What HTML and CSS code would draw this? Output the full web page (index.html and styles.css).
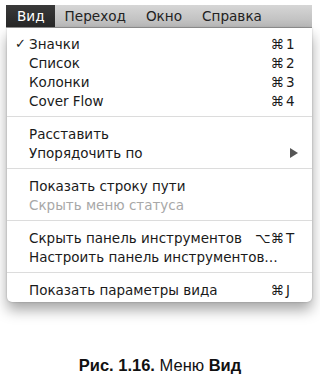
FILE: index.html
```html
<!DOCTYPE html>
<html lang="ru">
<head>
    <meta charset="UTF-8">
    <meta name="viewport" content="width=device-width, initial-scale=1.0">
    <title>Меню Вид</title>
    <link rel="stylesheet" href="styles.css">
</head>
<body>
    <div class="figure">
        <div class="menubar">
            <span class="menubar-item active">Вид</span>
            <span class="menubar-item">Переход</span>
            <span class="menubar-item">Окно</span>
            <span class="menubar-item">Справка</span>
        </div>

        <div class="menu">
            <div class="menu-group">
                <div class="menu-item">
                    <span class="mark">&#10003;</span>
                    <span class="label">Значки</span>
                    <span class="mods">&#8984;</span><span class="key">1</span>
                </div>
                <div class="menu-item">
                    <span class="mark"></span>
                    <span class="label">Список</span>
                    <span class="mods">&#8984;</span><span class="key">2</span>
                </div>
                <div class="menu-item">
                    <span class="mark"></span>
                    <span class="label">Колонки</span>
                    <span class="mods">&#8984;</span><span class="key">3</span>
                </div>
                <div class="menu-item">
                    <span class="mark"></span>
                    <span class="label">Cover Flow</span>
                    <span class="mods">&#8984;</span><span class="key">4</span>
                </div>
            </div>
            <div class="separator"></div>
            <div class="menu-group">
                <div class="menu-item">
                    <span class="mark"></span>
                    <span class="label">Расставить</span>
                </div>
                <div class="menu-item">
                    <span class="mark"></span>
                    <span class="label">Упорядочить по</span>
                    <span class="submenu-arrow"></span>
                </div>
            </div>
            <div class="separator"></div>
            <div class="menu-group">
                <div class="menu-item">
                    <span class="mark"></span>
                    <span class="label">Показать строку пути</span>
                </div>
                <div class="menu-item disabled">
                    <span class="mark"></span>
                    <span class="label">Скрыть меню статуса</span>
                </div>
            </div>
            <div class="separator"></div>
            <div class="menu-group">
                <div class="menu-item">
                    <span class="mark"></span>
                    <span class="label">Скрыть панель инструментов</span>
                    <span class="mods">&#8997;&#8984;</span><span class="key">T</span>
                </div>
                <div class="menu-item">
                    <span class="mark"></span>
                    <span class="label">Настроить панель инструментов…</span>
                </div>
            </div>
            <div class="separator"></div>
            <div class="menu-group">
                <div class="menu-item">
                    <span class="mark"></span>
                    <span class="label">Показать параметры вида</span>
                    <span class="mods">&#8984;</span><span class="key">J</span>
                </div>
            </div>
        </div>

        <p class="caption"><b>Рис. 1.16.</b> Меню <b>Вид</b></p>
    </div>
</body>
</html>
```

FILE: styles.css
```css
body {
    margin: 0;
    background-color: #ffffff;
    font-family: 'DejaVu Sans', sans-serif;
    color: #1a1a1a;
}
.figure {
    width: 320px;
    padding-top: 5px;
}
.menubar {
    display: flex;
    align-items: center;
    width: 306px;
    height: 22px;
    margin-left: 6px;
    background: linear-gradient(#d6d6d6, #b9b9b9);
    border-bottom: 1px solid #9a9a9a;
    font-size: 13.6px;
    color: #222;
}
.menubar-item {
    height: 22px;
    line-height: 22px;
    padding: 0 10px;
}
.menubar-item.active {
    background: linear-gradient(#3a3a3a, #262626);
    color: #ffffff;
    padding: 0 10px 0 11px;
}
.menu {
    width: 305px;
    margin-left: 7px;
    padding: 6px 0 3px 0;
    background-color: #ffffff;
    border-radius: 0 0 5px 5px;
    box-shadow: 0 8px 14px rgba(0, 0, 0, 0.35), 0 0 2px rgba(0, 0, 0, 0.25);
    font-size: 13.5px;
}
.menu-item {
    display: flex;
    align-items: center;
    height: 19px;
    padding: 0 14px 0 8px;
}
.mark {
    width: 14px;
    font-size: 13px;
    font-weight: bold;
}
.label {
    flex: 1;
}
.mods {
    text-align: right;
}
.key {
    width: 12px;
    padding-left: 2px;
}
.disabled {
    color: #a8a8a8;
}
.submenu-arrow {
    width: 0;
    height: 0;
    border-top: 5px solid transparent;
    border-bottom: 5px solid transparent;
    border-left: 8px solid #555;
}
.separator {
    height: 1px;
    margin: 6px 0 7px 0;
    background-color: #dcdcdc;
}
.caption {
    margin: 54px 0 0 0;
    text-align: center;
    font-family: 'Liberation Sans', Arial, sans-serif;
    font-size: 16.5px;
    color: #111;
}
.caption b {
    font-weight: bold;
}
```
